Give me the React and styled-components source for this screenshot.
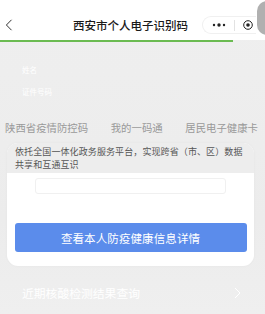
import styled, { createGlobalStyle } from "styled-components"

const GlobalStyle = createGlobalStyle`
  html, body {
    margin: 0;
    padding: 0;
    background: #eeeeee;
  }
  * { box-sizing: border-box; }
`

const tabs = ["陕西省疫情防控码", "我的一码通", "居民电子健康卡"]

export default function App() {
  return (
    <>
      <GlobalStyle />
      <Page>
        <NavBar>
          <BackButton>
            <svg width="8" height="12" viewBox="0 0 8 12">
              <path d="M6.5 0.8 L1.4 6 L6.5 11.2" fill="none" stroke="#333" strokeWidth="1" />
            </svg>
          </BackButton>
          <Title>西安市个人电子识别码</Title>
          <Capsule>
            <svg width="14" height="4" viewBox="0 0 14 4">
              <circle cx="2" cy="2" r="1.2" fill="#222" />
              <circle cx="7" cy="2" r="1.7" fill="#222" />
              <circle cx="12" cy="2" r="1.2" fill="#222" />
            </svg>
            <CapsuleDivider />
            <svg width="10" height="10" viewBox="0 0 10 10">
              <circle cx="5" cy="5" r="4.3" fill="none" stroke="#222" strokeWidth="1" />
              <circle cx="5" cy="5" r="1.8" fill="#222" />
            </svg>
          </Capsule>
          <FloatBall />
        </NavBar>
        <Progress />

        <Profile>
          <ProfileLabel>姓名</ProfileLabel>
          <ProfileLabel>证件号码</ProfileLabel>
        </Profile>

        <Tabs>
          {tabs.map((t) => (
            <Tab key={t}>{t}</Tab>
          ))}
        </Tabs>

        <Card>
          <Notice>依托全国一体化政务服务平台，实现跨省（市、区）数据共享和互通互识</Notice>
          <CardBody>
            <CodeBox />
            <DetailButton>查看本人防疫健康信息详情</DetailButton>
          </CardBody>
        </Card>

        <QueryRow>
          <span>近期核酸检测结果查询</span>
          <svg width="7" height="12" viewBox="0 0 7 12">
            <path d="M1 1 L6 6 L1 11" fill="none" stroke="#fff" strokeWidth="1" />
          </svg>
        </QueryRow>
      </Page>
    </>
  )
}

const Page = styled.div`
  width: 265px;
  height: 314px;
  overflow: hidden;
  background: linear-gradient(#efefef, #ececec 70%, #efefef);
  font-family: "Noto Sans CJK SC", "Noto Sans", sans-serif;
`

const NavBar = styled.div`
  position: relative;
  height: 40px;
  background: #ffffff;
  display: flex;
  align-items: center;
  padding: 10px 0 0 5px;
`

const BackButton = styled.div`
  width: 12px;
  display: flex;
  align-items: center;
`

const Title = styled.div`
  flex: 1;
  text-align: center;
  font-size: 11.5px;
  font-weight: 500;
  color: #1a1a1a;
  padding-left: 42px;
`

const Capsule = styled.div`
  display: flex;
  align-items: center;
  gap: 8px;
  height: 18px;
  margin-right: 9px;
  padding: 0 3px 0 9px;
  border: 1px solid #f0f0f0;
  border-right: none;
  border-radius: 9px 0 0 9px;
`

const CapsuleDivider = styled.div`
  width: 1px;
  height: 11px;
  background: #e2e2e2;
`

const FloatBall = styled.div`
  position: absolute;
  right: -12px;
  top: 1px;
  width: 20px;
  height: 34px;
  border-radius: 10px;
  background: #9c9c9c;
  opacity: 0.8;
`

const Progress = styled.div`
  width: 233px;
  height: 2px;
  background: #6bbb52;
`

const Profile = styled.div`
  display: flex;
  flex-direction: column;
  gap: 12px;
  padding: 23px 0 0 22px;
  height: 79px;
`

const ProfileLabel = styled.div`
  font-size: 7.5px;
  line-height: 10px;
  color: #ffffff;
`

const Tabs = styled.div`
  display: flex;
  justify-content: space-between;
  padding: 0 7px 0 5px;
  height: 22px;
`

const Tab = styled.div`
  font-size: 10.4px;
  line-height: 14px;
  color: #999999;
`

const Card = styled.div`
  margin: 0 11px 0 7px;
  border-radius: 11px;
  overflow: hidden;
  background: #ffffff;
  box-shadow: 0 0 3px rgba(0, 0, 0, 0.04);
`

const Notice = styled.div`
  background: #ededed;
  padding: 3px 8px 2px 8px;
  font-size: 9px;
  line-height: 12.5px;
  color: #555555;
  letter-spacing: 0.1px;
`

const CardBody = styled.div`
  display: flex;
  flex-direction: column;
  align-items: center;
  padding: 5px 8px 14px;
`

const CodeBox = styled.div`
  width: 191px;
  height: 16px;
  border: 1px solid #f0f0f0;
  border-radius: 3px;
  margin-bottom: 29px;
`

const DetailButton = styled.div`
  width: 232px;
  height: 29px;
  border-radius: 3px;
  background: #5b8ceb;
  color: #ffffff;
  font-size: 11.5px;
  display: flex;
  align-items: center;
  justify-content: center;
  letter-spacing: 0.1px;
`

const QueryRow = styled.div`
  display: flex;
  align-items: center;
  justify-content: space-between;
  padding: 18px 24px 0 22px;
  font-size: 11.8px;
  color: #ffffff;
`
